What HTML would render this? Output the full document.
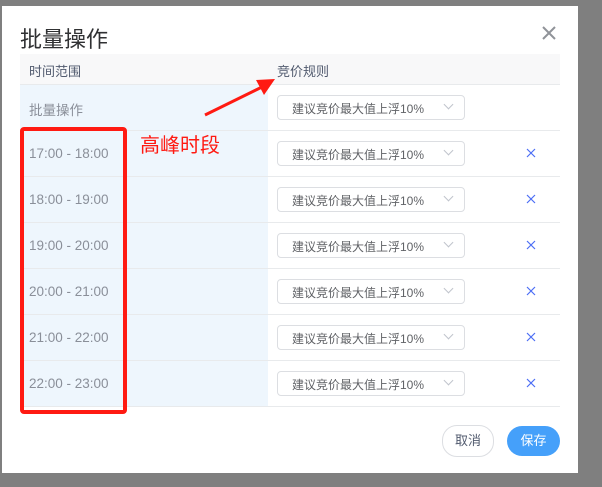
<!DOCTYPE html>
<html><head><meta charset="utf-8"><style>
body{margin:0;width:602px;height:487px;background:#7f7f7f;position:relative;overflow:hidden;font-family:"Liberation Sans","Noto Sans CJK SC",sans-serif;}
.dlg{position:absolute;left:2px;top:6px;width:576px;height:467px;background:#fff;}
.title{position:absolute;left:18px;top:16px;font-size:22px;color:#303133;}
.close{position:absolute;left:538px;top:18px;width:18px;height:18px;}
.tbl{position:absolute;left:18px;top:48px;width:540px;}
.hd{height:30px;background:#f8f8f9;border-bottom:1px solid #e8eaec;position:relative;font-size:13px;color:#515a6e;}
.row{height:45px;border-bottom:1px solid #e8eaec;position:relative;}
.lc{position:absolute;left:0;top:0;width:248px;height:100%;background:#eef6fd;}
.t{position:absolute;left:9px;font-size:13.5px;color:#8a8f99;}
.sel{position:absolute;left:257px;top:10px;width:186px;height:23px;border:1px solid #dcdee2;border-radius:4px;background:#fff;font-size:12px;color:#606266;}
.sel span{position:absolute;left:14px;top:4px;}
.sel i{position:absolute;right:12px;top:5px;width:6px;height:6px;border-right:1px solid #c0c4cc;border-bottom:1px solid #c0c4cc;transform:rotate(45deg);}
.x{position:absolute;left:506px;top:17px;width:10px;height:10px;}
.btn{position:absolute;top:419px;height:30px;border-radius:15px;font-size:13px;text-align:center;line-height:30px;}
</style></head><body>
<div class="dlg">
<div class="title">批量操作</div>
<svg class="close" viewBox="0 0 18 18"><path d="M3 3L15 15M15 3L3 15" stroke="#909399" stroke-width="2"/></svg>
<div class="tbl">
<div class="hd"><span style="position:absolute;left:9px;top:7px">时间范围</span><span style="position:absolute;left:257px;top:7px">竞价规则</span></div>
<div class="row"><div class="lc"></div><span class="t" style="top:14px">批量操作</span><div class="sel"><span>建议竞价最大值上浮10%</span><i></i></div></div>
<div class="row"><div class="lc"></div><span class="t" style="top:15px">17:00 - 18:00</span><div class="sel"><span>建议竞价最大值上浮10%</span><i></i></div><svg class="x" viewBox="0 0 10 10"><path d="M1 1L9 9M9 1L1 9" stroke="#4c6ef5" stroke-width="1.2"/></svg></div>
<div class="row"><div class="lc"></div><span class="t" style="top:15px">18:00 - 19:00</span><div class="sel"><span>建议竞价最大值上浮10%</span><i></i></div><svg class="x" viewBox="0 0 10 10"><path d="M1 1L9 9M9 1L1 9" stroke="#4c6ef5" stroke-width="1.2"/></svg></div>
<div class="row"><div class="lc"></div><span class="t" style="top:15px">19:00 - 20:00</span><div class="sel"><span>建议竞价最大值上浮10%</span><i></i></div><svg class="x" viewBox="0 0 10 10"><path d="M1 1L9 9M9 1L1 9" stroke="#4c6ef5" stroke-width="1.2"/></svg></div>
<div class="row"><div class="lc"></div><span class="t" style="top:15px">20:00 - 21:00</span><div class="sel"><span>建议竞价最大值上浮10%</span><i></i></div><svg class="x" viewBox="0 0 10 10"><path d="M1 1L9 9M9 1L1 9" stroke="#4c6ef5" stroke-width="1.2"/></svg></div>
<div class="row"><div class="lc"></div><span class="t" style="top:15px">21:00 - 22:00</span><div class="sel"><span>建议竞价最大值上浮10%</span><i></i></div><svg class="x" viewBox="0 0 10 10"><path d="M1 1L9 9M9 1L1 9" stroke="#4c6ef5" stroke-width="1.2"/></svg></div>
<div class="row"><div class="lc"></div><span class="t" style="top:15px">22:00 - 23:00</span><div class="sel"><span>建议竞价最大值上浮10%</span><i></i></div><svg class="x" viewBox="0 0 10 10"><path d="M1 1L9 9M9 1L1 9" stroke="#4c6ef5" stroke-width="1.2"/></svg></div>
</div>
<div class="btn" style="left:440px;width:50px;border:1px solid #dcdee2;color:#515a6e;">取消</div>
<div class="btn" style="left:505px;width:53px;background:#45a0fa;color:#fff;top:420px;">保存</div>
</div>
<div style="position:absolute;left:20px;top:127px;width:99px;height:279px;border:4px solid #ff1a12;border-radius:4px;"></div>
<div style="position:absolute;left:140px;top:129px;font-size:20px;color:#ff1a12;font-family:'Noto Sans CJK SC',sans-serif;">高峰时段</div>
<svg style="position:absolute;left:0;top:0" width="602" height="487"><path d="M205 115L262 87" stroke="#ff1a12" stroke-width="3"/><path d="M275 79L256 80L264 95Z" fill="#ff1a12"/></svg>
</body></html>
